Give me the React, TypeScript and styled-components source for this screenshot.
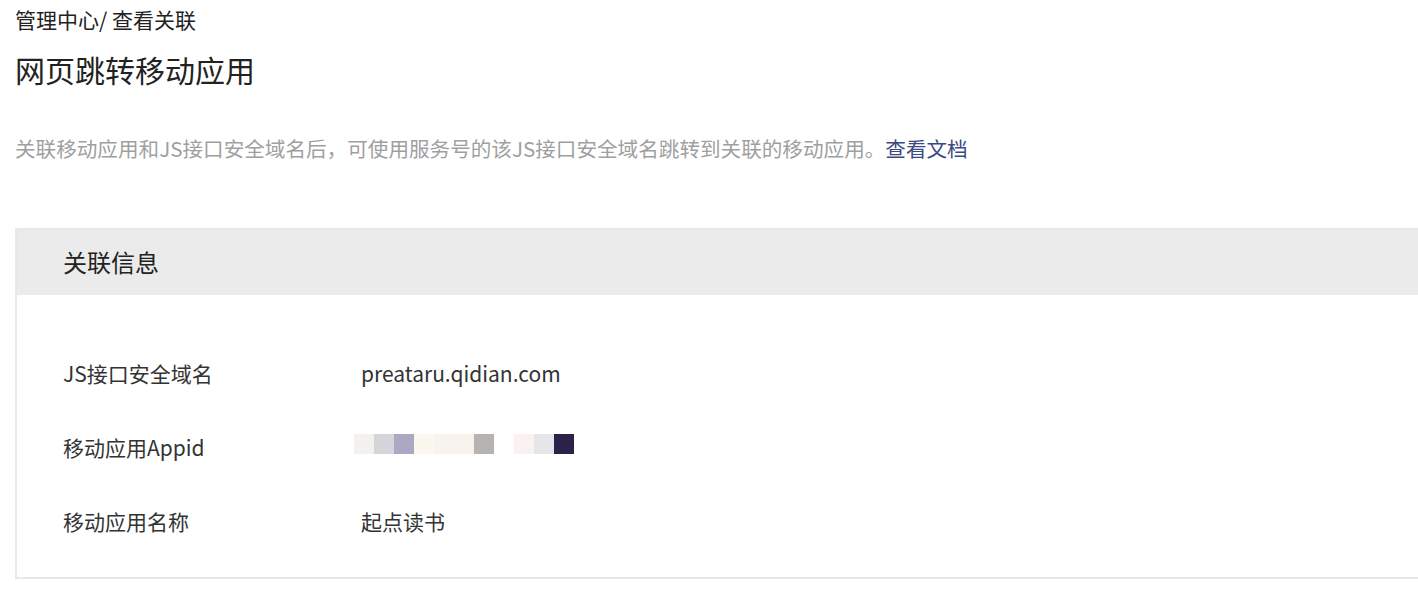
import React from "react";
import styled, { createGlobalStyle } from "styled-components";

const GlobalStyle = createGlobalStyle`
  html, body {
    margin: 0;
    padding: 0;
    background: #ffffff;
    overflow: hidden;
  }
  body {
    font-family: "Noto Sans CJK SC", "Noto Sans", "Liberation Sans", sans-serif;
    color: #222;
  }
`;

const Page = styled.div`
  padding-left: 15px;
  width: 1440px;
`;

const Breadcrumb = styled.div`
  font-size: 21px;
  line-height: 38px;
  color: #222;
`;

const Title = styled.h1`
  margin: 11px 0 0;
  font-size: 30px;
  font-weight: 400;
  line-height: 40px;
  color: #222;
`;

const Description = styled.p`
  margin: 44px 0 0;
  font-size: 20.6px;
  line-height: 30px;
  color: #9f9f9f;
`;

const DocLink = styled.a`
  color: #3a4a80;
  text-decoration: none;
`;

const Card = styled.section`
  margin-top: 65px;
  border: 2px solid #e8e8e8;
  border-right: none;
`;

const CardHeader = styled.div`
  height: 65px;
  background: #ebebeb;
  display: flex;
  align-items: center;
  padding-left: 46px;
  font-size: 24px;
  line-height: 30px;
  padding-bottom: 2px;
  box-sizing: border-box;
  color: #222;
`;

const CardBody = styled.div`
  padding: 41px 0 19px 46px;
`;

const Row = styled.div`
  display: grid;
  grid-template-columns: 298px 1fr;
  align-items: center;
  height: 74px;
  font-size: 21px;
  color: #333;
`;

const Mosaic = styled.div`
  display: flex;
  margin-left: -7px;
  margin-top: -6px;
`;

const Pixel = styled.span<{ $c: string }>`
  width: 20px;
  height: 20px;
  background: ${(p) => p.$c};
`;

const mosaicColors = [
  "#f3f1ee",
  "#d6d6da",
  "#aca8c4",
  "#faf7ee",
  "#f7f3ef",
  "#f8f2ec",
  "#b8b3b3",
  "#fefefe",
  "#fcf1f1",
  "#e6e5ea",
  "#2a2249",
];

export default function App() {
  return (
    <>
      <GlobalStyle />
      <Page>
        <Breadcrumb>管理中心/ 查看关联</Breadcrumb>
        <Title>网页跳转移动应用</Title>
        <Description>
          关联移动应用和JS接口安全域名后，可使用服务号的该JS接口安全域名跳转到关联的移动应用。
          <DocLink href="#">查看文档</DocLink>
        </Description>
        <Card>
          <CardHeader>关联信息</CardHeader>
          <CardBody>
            <Row>
              <span>JS接口安全域名</span>
              <span>preataru.qidian.com</span>
            </Row>
            <Row>
              <span>移动应用Appid</span>
              <Mosaic>
                {mosaicColors.map((c, i) => (
                  <Pixel key={i} $c={c} />
                ))}
              </Mosaic>
            </Row>
            <Row>
              <span>移动应用名称</span>
              <span>起点读书</span>
            </Row>
          </CardBody>
        </Card>
      </Page>
    </>
  );
}
